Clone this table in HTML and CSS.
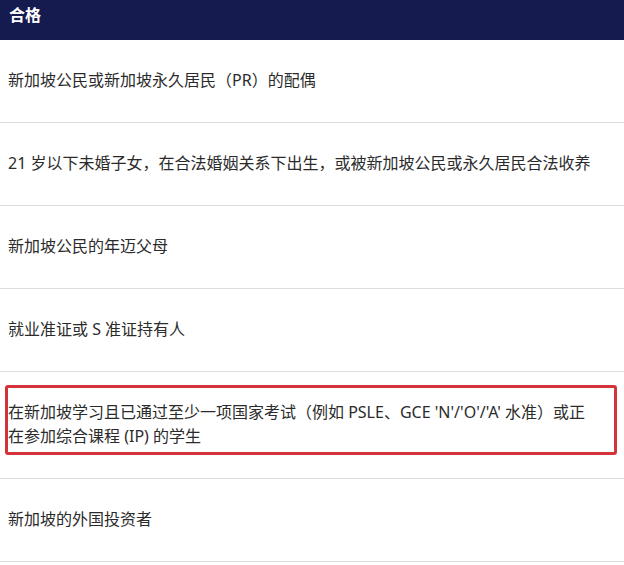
FILE: index.html
```html
<!DOCTYPE html>
<html>
    <head>
        <meta charset="UTF-8">
        <meta name="viewport" content="width=device-width, initial-scale=1.0">
        <title>合格</title>
        <link rel="stylesheet" href="styles.css">
    </head>
    <body>
        <div class="tabla">
            <div class="cabecera">合格</div>
            <div class="fila">新加坡公民或新加坡永久居民（PR）的配偶</div>
            <div class="fila">21 岁以下未婚子女，在合法婚姻关系下出生，或被新加坡公民或永久居民合法收养</div>
            <div class="fila">新加坡公民的年迈父母</div>
            <div class="fila">就业准证或 S 准证持有人</div>
            <div class="fila marcada">
                在新加坡学习且已通过至少一项国家考试（例如 PSLE、GCE 'N'/'O'/'A' 水准）或正在参加综合课程 (IP) 的学生
                <span class="recuadro"></span>
            </div>
            <div class="fila">新加坡的外国投资者</div>
        </div>
    </body>
</html>
```

FILE: styles.css
```css
body{
    margin : 0;
    background-color : #ffffff;
    font-family : "Noto Sans", "Noto Sans CJK SC", sans-serif;
}

.tabla{
    width : 624px;
}

.cabecera{
    background-color : #161b4f;
    color : white;
    height : 40px;
    line-height : 31px;
    padding : 0 9px;
    font-size : 16px;
    font-weight : bold;
}

.fila{
    padding : 28px 8px 30px 8px;
    font-size : 16px;
    line-height : 24px;
    color : #2b2b2b;
    border-bottom : 1px solid #dddddd;
}

.marcada{
    position : relative;
    padding-right : 24px;
}

.recuadro{
    position : absolute;
    top : 13px;
    left : 5px;
    right : 7px;
    height : 64px;
    border : 3px solid #d2343a;
    border-radius : 3px;
}
```
